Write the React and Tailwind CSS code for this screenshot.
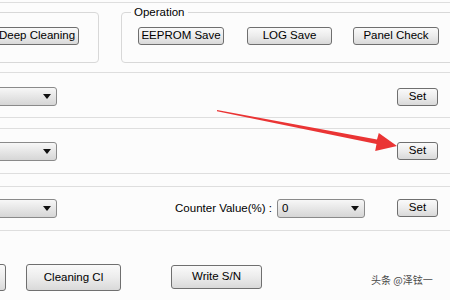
import React from 'react';

const font = { fontFamily: '"Liberation Sans", Arial, sans-serif' };

const Btn = ({ className = '', children }) => (
  <button
    className={`shrink-0 border border-[#6f6f6f] rounded-[3px] bg-linear-to-b from-[#fafafa] via-[#ececec] to-[#d9d9d9] text-[11.5px] leading-none text-black flex items-center justify-center whitespace-nowrap ${className}`}
  >
    {children}
  </button>
);

const Combo = ({ className = '', value = '' }) => (
  <div
    className={`shrink-0 h-[19px] border border-[#8a8a8a] rounded-[3px] bg-linear-to-b from-[#f7f7f7] to-[#d6d6d6] flex items-center justify-between pl-[4px] pr-[5px] text-[11.5px] text-black ${className}`}
  >
    <span>{value}</span>
    <svg width="8" height="5" viewBox="0 0 8 5">
      <path d="M0 0H8L4 5Z" fill="#111" />
    </svg>
  </div>
);

export default function App() {
  return (
    <div className="relative w-[450px] h-[300px] overflow-hidden bg-[#fcfcfc]" style={font}>
      <div className="h-[2px]" />

      {/* top section with group boxes */}
      <div className="h-[71px] border-y border-[#dedede] flex items-start gap-[22px]">
        <div className="-ml-[20px] w-[119px] h-[51px] mt-[9px] border border-[#d8d8d8] rounded-[4px] pt-[14px] pl-[12px]">
          <Btn className="w-[86px] h-[18px] pl-[2px]">Deep Cleaning</Btn>
        </div>
        <fieldset className="flex-1 -mr-[20px] h-[58px] mt-[2px] border border-[#d8d8d8] rounded-[4px] pl-[16px]">
          <legend className="ml-[-7px] px-[3px] text-[11.5px] leading-[14px] text-black">Operation</legend>
          <div className="flex items-center mt-[8px]">
            <Btn className="w-[86px] h-[18px]">EEPROM Save</Btn>
            <Btn className="w-[85px] h-[18px] ml-[23px]">LOG Save</Btn>
            <Btn className="w-[86px] h-[18px] ml-[21px]">Panel Check</Btn>
          </div>
        </fieldset>
      </div>

      {/* row 1 */}
      <div className="h-[45px] border-b border-[#dedede] flex items-start justify-between pt-[14px] pr-[12px]">
        <Combo className="-ml-[40px] w-[97px]" />
        <Btn className="w-[41px] h-[18px] mt-[1px]">Set</Btn>
      </div>

      <div className="h-[10px]" />

      {/* row 2 */}
      <div className="h-[46px] border-y border-[#dedede] flex items-start justify-between pt-[13px] pr-[12px]">
        <Combo className="-ml-[40px] w-[97px]" />
        <Btn className="w-[41px] h-[18px]">Set</Btn>
      </div>

      <div className="h-[12px]" />

      {/* row 3 */}
      <div className="h-[45px] border-y border-[#dedede] flex items-start pt-[12px] pr-[12px]">
        <Combo className="-ml-[40px] w-[97px]" />
        <div className="flex-1" />
        <span className="text-[11.5px] leading-[19px] text-black mr-[5px]">Counter Value(%) :</span>
        <Combo className="w-[88px]" value="0" />
        <Btn className="w-[41px] h-[18px] ml-[32px]">Set</Btn>
      </div>

      {/* bottom buttons */}
      <div className="flex items-start pt-[33px]">
        <Btn className="-ml-[60px] w-[66px] h-[27px]" />
        <Btn className="w-[95px] h-[27px] ml-[20px]">Cleaning Cl</Btn>
        <Btn className="w-[91px] h-[24px] ml-[50px] mt-[1px]">Write S/N</Btn>
      </div>

      {/* watermark */}
      <div
        className="absolute left-[371px] top-[272px] text-[10px] leading-[16px] text-[#4a4a4a] whitespace-nowrap [text-shadow:0_0_2px_#fff]"
        style={{ fontFamily: '"Noto Sans CJK SC", "Liberation Sans", sans-serif' }}
      >
        头条 @泽铉一
      </div>

      {/* red arrow */}
      <svg className="absolute left-0 top-0 pointer-events-none" width="450" height="300">
        <polygon
          points="217,110 377,139.5 378.8,133 397,146 375.2,151 376.5,144 217,111.2"
          fill="#ea3434"
        />
      </svg>
    </div>
  );
}
